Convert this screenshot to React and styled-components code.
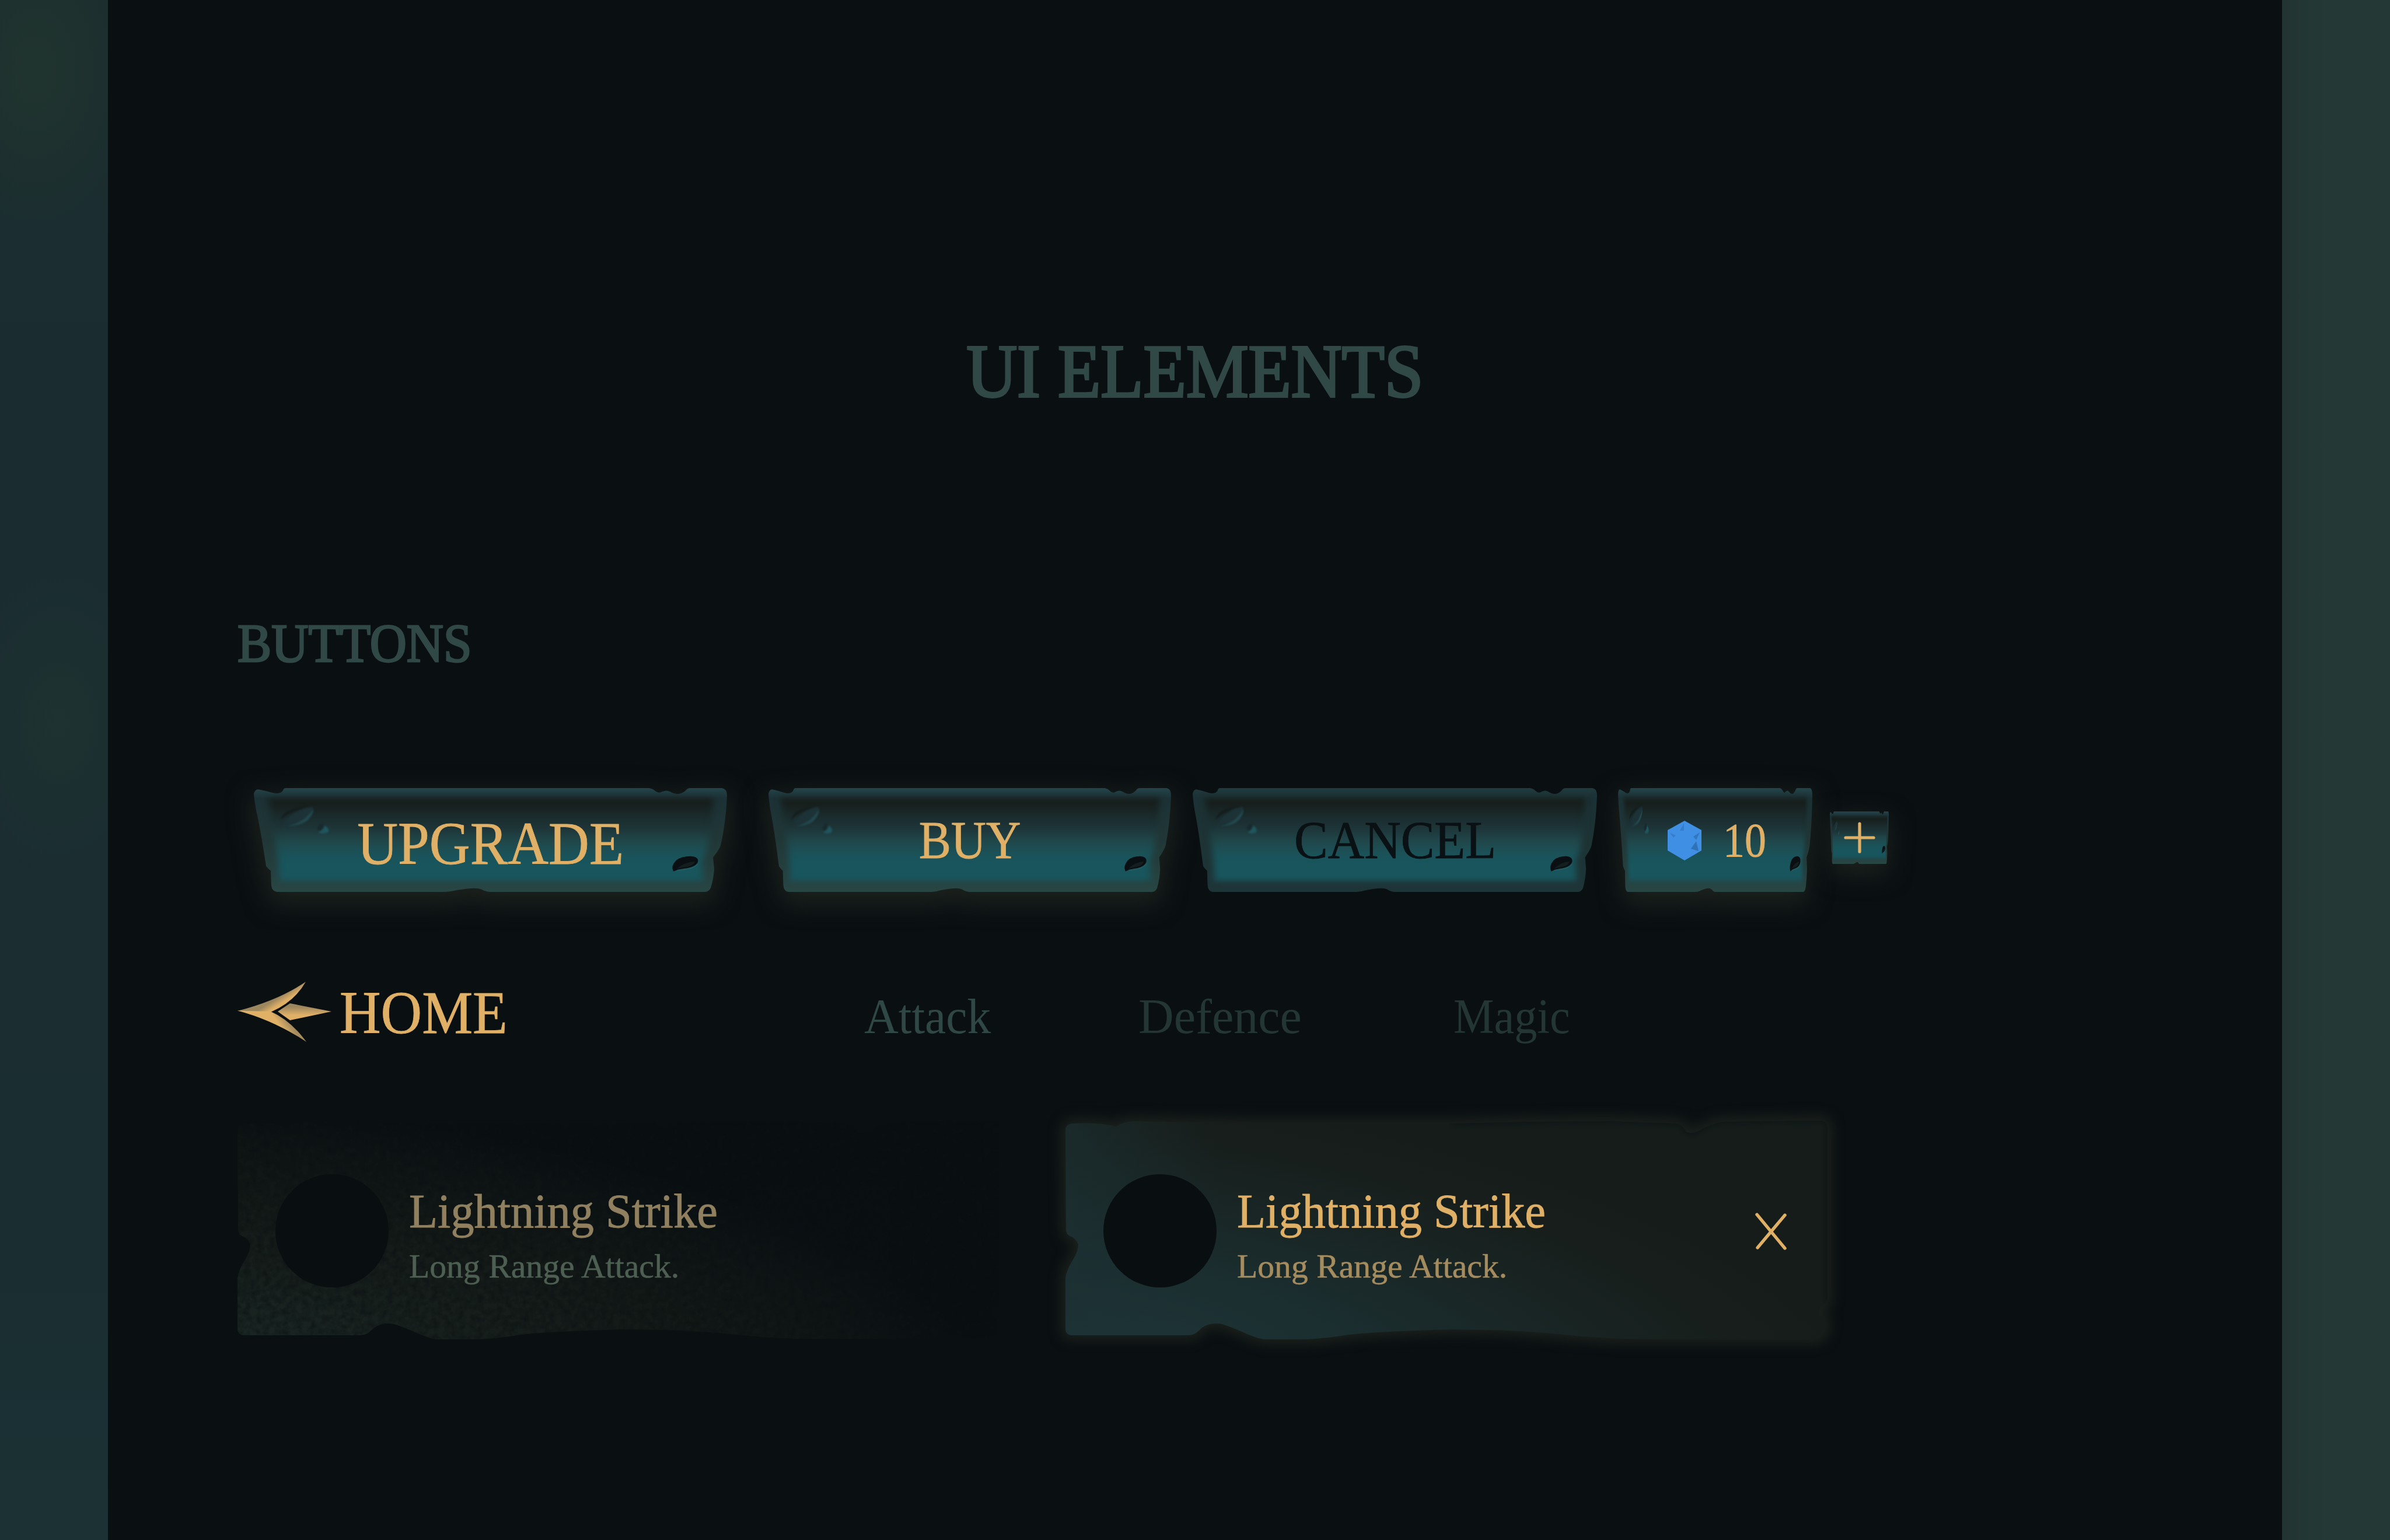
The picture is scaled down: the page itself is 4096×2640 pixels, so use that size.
import React from "react";
import styled, { createGlobalStyle } from "styled-components";

const GlobalStyle = createGlobalStyle`
  html, body {
    margin: 0;
    padding: 0;
    background: #0a0f12;
  }
`;

const Page = styled.div`
  display: grid;
  grid-template-columns: 185px 1fr 185px;
  width: 4096px;
  height: 2640px;
  overflow: hidden;
  font-family: "Liberation Serif", serif;
`;

const LeftRail = styled.div`
  background:
    radial-gradient(ellipse 190px 290px at 60px 120px, #20342f 0%, rgba(32, 52, 47, 0) 100%),
    radial-gradient(ellipse 170px 260px at 100px 1240px, #1e3230 0%, rgba(30, 50, 48, 0) 100%),
    linear-gradient(#1b2d2e, #1a2c30 30%, #1a2d31 75%, #1b3134);
`;

const RightRail = styled.div`
  background: linear-gradient(90deg, #213431, #243835 40%, #243835);
`;

const Panel = styled.main`
  display: flex;
  flex-direction: column;
  padding: 0 222px;
  background: #0a0f12;
`;

const Text = styled.span`
  display: block;
  flex: none;
  white-space: nowrap;
  font-size: ${(p) => p.$size}px;
  line-height: 1;
  color: ${(p) => p.$color || "#e0b067"};
  transform: scaleX(${(p) => p.$squeeze || 1});
  transform-origin: ${(p) => p.$origin || "left"} center;
  -webkit-text-stroke: ${(p) => p.$stroke || 0}px currentColor;
`;

const Title = styled.h1`
  display: flex;
  justify-content: center;
  margin: 572px 0 0;
  height: 130px;
  font-weight: 400;
`;

const SectionTitle = styled.h2`
  margin: 353px 0 0;
  height: 95px;
  font-weight: 400;
`;

const ButtonRow = styled.div`
  display: flex;
  align-items: flex-start;
  height: 178px;
  margin-top: 201px;
  padding-left: 28px;
`;

const StoneButton = styled.button`
  position: relative;
  flex: none;
  display: flex;
  align-items: center;
  justify-content: center;
  box-sizing: border-box;
  width: ${(p) => p.$w}px;
  height: ${(p) => p.$h || 178}px;
  margin: ${(p) => p.$top || 0}px 0 0 ${(p) => p.$left || 0}px;
  padding: ${(p) => p.$drop || 0}px 0 0;
  border: 0;
  background: none;
  font-family: inherit;
`;

const StoneArt = styled.svg`
  position: absolute;
  inset: 0;
  width: 100%;
  height: 100%;
  overflow: visible;
`;

const Face = styled.div`
  position: relative;
  display: flex;
  align-items: center;
  gap: ${(p) => p.$gap || 0}px;
  padding-left: ${(p) => p.$shift || 0}px;
`;

const NavRow = styled.nav`
  display: flex;
  align-items: flex-start;
  height: 110px;
  margin-top: 152px;
`;

const HomeLink = styled.div`
  display: flex;
  gap: 13px;
  width: 1074px;
`;

const ArrowIcon = styled.svg`
  width: 162px;
  height: 104px;
  margin-top: 2px;
`;

const HomeLabel = styled.div`
  margin-top: 3px;
`;

const Tab = styled.div`
  width: ${(p) => p.$w}px;
  margin-top: 20px;
`;

const CardRow = styled.div`
  display: flex;
  gap: 113px;
  margin-top: 131px;
`;

const Card = styled.article`
  position: relative;
  display: flex;
  flex: none;
  box-sizing: border-box;
  width: 1306px;
  height: 380px;
  padding: 91px 70px 0 65px;
`;

const CardArt = styled.svg`
  position: absolute;
  inset: 0;
  width: 1306px;
  height: 380px;
  overflow: visible;

  filter {
    color-interpolation-filters: sRGB;
  }
`;

const Avatar = styled.div`
  position: relative;
  flex: none;
  width: 194px;
  height: 194px;
  border-radius: 50%;
  background: #090e11;
`;

const CardText = styled.div`
  position: relative;
  display: flex;
  flex-direction: column;
  flex: 1;
  gap: 24px;
  margin: 23px 0 0 35px;
`;

const CloseIcon = styled.svg`
  position: relative;
  flex: none;
  width: 54px;
  height: 64px;
  margin-top: 66px;
`;

const STONE =
  "M0 10 Q2 1 9 2.5 Q22 5 32 8 Q46 11 50 4 Q51 0 55 0 L677 0 Q684 1 688 5 Q694 10 700 6 Q707 3 713 6 Q724 12 732 9 Q738 7 742 2 Q744 0 748 0 L802 0 Q811 1 811 13 Q809 60 800 98 Q797 106 787 118 L789 138 Q788 155 783 170 Q780 177 772 177 L405 177 Q396 176 391 173 Q384 170 371 171 Q352 173 343 175 Q335 177 323 177 L42 177 Q31 177 30 166 L29 141 Q24 137 21 133 Q12 72 4 38 Q1 22 0 10Z";

// Carved slab behind every button, stretched to the width of the button.
// sx / sy undo the stretch so the blur stays even on narrow buttons.
const Stone = ({ id, glow, w = 811, h = 177 }) => {
  const sx = 811 / w;
  const sy = 177 / h;
  return (
    <StoneArt viewBox="0 0 811 177" preserveAspectRatio="none">
      <defs>
        <linearGradient id={`${id}-rim`} x1="0" y1="0" x2="0" y2="1">
          <stop offset="0" stopColor={glow ? "#24444a" : "#203a3d"} />
          <stop offset="0.1" stopColor="#1c3135" />
          <stop offset="0.5" stopColor={glow ? "#213737" : "#1d3334"} />
          <stop offset="1" stopColor={glow ? "#284644" : "#1e3538"} />
        </linearGradient>
        <linearGradient id={`${id}-face`} x1="0" y1="0" x2="0" y2="1">
          <stop offset="0" stopColor="#161d1a" />
          <stop offset="0.08" stopColor="#171f1c" />
          <stop offset="0.22" stopColor="#1a2b2d" />
          <stop offset="0.36" stopColor="#1d3437" />
          <stop offset="0.52" stopColor="#20474a" />
          <stop offset="0.68" stopColor="#1a5259" />
          <stop offset="0.8" stopColor="#18555d" />
          <stop offset="1" stopColor="#18555d" />
        </linearGradient>
        <clipPath id={`${id}-clip`}>
          <path d={STONE} />
        </clipPath>
        <filter
          id={`${id}-soft`}
          x="-10%"
          y="-20%"
          width="120%"
          height="140%"
          colorInterpolationFilters="sRGB"
        >
          <feGaussianBlur stdDeviation="6 5" />
        </filter>
        <filter id={`${id}-chip`} colorInterpolationFilters="sRGB">
          <feGaussianBlur stdDeviation="1.6" />
        </filter>
        <filter
          id={`${id}-glow`}
          x="-100%"
          y="-100%"
          width="300%"
          height="300%"
          colorInterpolationFilters="sRGB"
        >
          <feGaussianBlur stdDeviation={`${20 * sx} ${20 * sy}`} />
        </filter>
      </defs>
      {glow && (
        <path
          d={STONE}
          transform={`translate(0 ${14 * sy})`}
          fill="#1c221d"
          stroke="#1c221d"
          strokeWidth="12"
          filter={`url(#${id}-glow)`}
        />
      )}
      <path d={STONE} fill={`url(#${id}-rim)`} />
      <g clipPath={`url(#${id}-clip)`}>
        <path
          d="M24 17 L788 17 Q784 70 776 108 L768 124 L770 158 L44 158 L42 128 Q34 66 24 17Z"
          fill={`url(#${id}-face)`}
          filter={`url(#${id}-soft)`}
        />
        <g filter={`url(#${id}-chip)`}>
          <path d="M46 54 Q50 34 98 30 Q60 40 46 54Z" fill="#131d1c" />
          <path d="M50 60 Q72 34 101 32 Q104 40 94 53 Q84 64 68 64Z" fill="#1c3236" />
          <path d="M102 36 Q103 44 92 55 Q82 64 56 65 Q78 60 88 51 Q97 43 102 36Z" fill="#22494f" />
          <path d="M108 70 Q112 58 119 61 Q121 66 114 73Z" fill="#182a2d" />
          <path d="M121 64 Q130 68 128 75 Q118 80 110 75 Q120 72 121 64Z" fill="#20555d" />
        </g>
      </g>
      <path
        d="M719 142 Q714 133 724 123 Q733 116 749 116 Q763 117 761 126 Q757 135 738 137 Q728 138 719 142Z"
        fill="#090f12"
      />
      <path d="M724 138 Q738 126 756 125 Q754 133 738 135 Q730 136 724 138Z" fill="#141e1e" />
      <path d="M725 140 Q752 139 761 130" fill="none" stroke="#4b6a60" strokeWidth="1" opacity="0.6" />
    </StoneArt>
  );
};

const Gem = () => (
  <svg width="60" height="68" viewBox="0 0 60 68">
    <path d="M30 0 L59 16 L59 51 L30 68 L1 51 L1 16Z" fill="#3f8fe5" />
    <path d="M29 4 L22 17 L29 17Z" fill="#347ecb" />
    <path d="M5 21 L11 29 L15 25Z" fill="#347ecb" />
    <path d="M56 20 L45 27 L50 33Z" fill="#3177be" />
    <path d="M50 35 L41 48 L54 52Z" fill="#2f72b6" />
  </svg>
);

const Plus = () => (
  <svg width="54" height="54" viewBox="0 0 54 54">
    <path d="M27 3V51M3 27H51" stroke="#e0b067" strokeWidth="5.2" strokeLinecap="round" />
  </svg>
);

const BackArrow = () => (
  <ArrowIcon viewBox="0 0 162 104">
    <defs>
      <linearGradient id="wing" gradientUnits="userSpaceOnUse" x1="62" y1="24" x2="76" y2="46">
        <stop offset="0.25" stopColor="#9c865e" />
        <stop offset="0.7" stopColor="#dfaf66" />
      </linearGradient>
      <linearGradient id="wingLow" gradientUnits="userSpaceOnUse" x1="88" y1="70" x2="74" y2="80">
        <stop offset="0" stopColor="#a58c5f" />
        <stop offset="0.9" stopColor="#e0b067" />
      </linearGradient>
      <linearGradient id="head" x1="0" y1="0" x2="0" y2="1">
        <stop offset="0.2" stopColor="#9c865e" />
        <stop offset="0.7" stopColor="#e0b067" />
      </linearGradient>
    </defs>
    <path d="M0 50 Q70 32 117 0 Q98 34 57 52Z" fill="url(#wing)" />
    <path d="M0 49.5 L57 51 Q91 66 118 103 Q62 66 0 49.5Z" fill="url(#wingLow)" />
    <path d="M69 51 L90 37 L161 51 L90 66Z" fill="url(#head)" />
  </ArrowIcon>
);

const SLAB =
  "M0 14 Q1 3 16 4 Q55 2 87 9 Q98 1 118 0 L320 4 L663 4 Q810 0 935 0 L1048 4 Q1056 6 1064 18 Q1072 23 1085 17 Q1108 3 1128 1 L1292 -1 Q1306 -1 1306 12 L1306 308 Q1302 316 1294 318 Q1289 327 1294 333 Q1302 337 1302 345 L1301 358 Q1299 373 1284 373 L958 373 Q900 371 844 365 Q780 359 731 358 L663 357 Q540 360 486 366 Q440 373 410 374 L345 374 Q330 374 303 361 L278 351 Q254 341 234 354 Q222 367 212 367 L12 367 Q0 367 0 355 L0 269 Q3 252 14 236 Q22 222 22 211 Q17 200 8 197 Q1 194 1 185Z";

const ActiveCardBack = () => (
  <CardArt viewBox="0 0 1306 380">
    <defs>
      <radialGradient
        id="on-fill"
        gradientUnits="userSpaceOnUse"
        cx="0"
        cy="0"
        r="1"
        gradientTransform="translate(30 400) rotate(6) scale(1400 470)"
      >
        <stop offset="0" stopColor="#1e3638" />
        <stop offset="0.35" stopColor="#1b2e30" />
        <stop offset="0.6" stopColor="#192625" />
        <stop offset="0.85" stopColor="#171e1b" />
        <stop offset="1" stopColor="#151c1a" />
      </radialGradient>
      <linearGradient id="on-side" x1="0" y1="0" x2="1" y2="0">
        <stop offset="0" stopColor="#1c3033" stopOpacity="0.6" />
        <stop offset="0.2" stopColor="#1c3033" stopOpacity="0" />
      </linearGradient>
      <filter id="on-glow" x="-10%" y="-20%" width="120%" height="140%">
        <feGaussianBlur stdDeviation="10" />
      </filter>
      <filter id="on-edge" x="-5%" y="-5%" width="110%" height="110%">
        <feGaussianBlur stdDeviation="3" />
      </filter>
      <clipPath id="on-slab">
        <path d={SLAB} />
      </clipPath>
    </defs>
    <path
      d={SLAB}
      fill="#1b211c"
      stroke="#1b211c"
      strokeWidth="16"
      strokeLinejoin="round"
      filter="url(#on-glow)"
    />
    <path d={SLAB} fill="url(#on-fill)" />
    <path d={SLAB} fill="url(#on-side)" />
    <g clipPath="url(#on-slab)">
      <path
        d="M663 4 Q810 0 935 0 L1048 4 Q1056 6 1064 18 Q1072 23 1085 17 Q1108 3 1128 1 L1292 -1 Q1306 -1 1306 12 L1306 308"
        fill="none"
        stroke="#0c1213"
        strokeWidth="6"
        opacity="0.6"
        filter="url(#on-edge)"
      />
    </g>
  </CardArt>
);

const IdleCardBack = () => (
  <CardArt viewBox="0 0 1306 380">
    <defs>
      <radialGradient
        id="off-fill"
        gradientUnits="userSpaceOnUse"
        cx="0"
        cy="0"
        r="1"
        gradientTransform="translate(20 390) rotate(5) scale(1290 420)"
      >
        <stop offset="0" stopColor="#1a2725" />
        <stop offset="0.3" stopColor="#171f1c" />
        <stop offset="0.6" stopColor="#131917" />
        <stop offset="0.85" stopColor="#0e1414" />
        <stop offset="1" stopColor="#0a0f12" />
      </radialGradient>
      <filter id="off-grain" x="0" y="0" width="100%" height="100%">
        <feTurbulence type="fractalNoise" baseFrequency="0.09" numOctaves="3" seed="4" />
        <feColorMatrix values="0 0 0 0 0.039  0 0 0 0 0.059  0 0 0 0 0.07  1.4 0 0 0 -0.5" />
      </filter>
      <clipPath id="off-slab">
        <path d={SLAB} />
      </clipPath>
    </defs>
    <path d={SLAB} fill="url(#off-fill)" />
    <g clipPath="url(#off-slab)" opacity="0.8">
      <rect width="1306" height="380" filter="url(#off-grain)" />
    </g>
  </CardArt>
);

const SkillCard = ({ active, title, subtitle }) => (
  <Card>
    {active ? <ActiveCardBack /> : <IdleCardBack />}
    <Avatar />
    <CardText>
      <Text $size={82} $squeeze={0.98} $stroke={0.8} $color={active ? "#e0b067" : "#90805f"}>
        {title}
      </Text>
      <Text $size={58} $squeeze={0.995} $stroke={0.5} $color={active ? "#a58c5f" : "#4d5f52"}>
        {subtitle}
      </Text>
    </CardText>
    {active && (
      <CloseIcon viewBox="0 0 54 64">
        <path d="M3 3L51 61M51 4L4 60" stroke="#e0b067" strokeWidth="5.4" strokeLinecap="round" />
      </CloseIcon>
    )}
  </Card>
);

const App = () => (
  <>
    <GlobalStyle />
    <Page>
      <LeftRail />
      <Panel>
        <Title>
          <Text $size={129} $squeeze={0.93} $origin="center" $color="#304846" $stroke={4}>
            UI ELEMENTS
          </Text>
        </Title>
        <SectionTitle>
          <Text $size={94} $squeeze={0.93} $color="#304846" $stroke={3}>
            BUTTONS
          </Text>
        </SectionTitle>

        <ButtonRow>
          <StoneButton $w={811} $drop={11}>
            <Stone id="upgrade" glow />
            <Face>
              <Text $size={104} $squeeze={0.93} $origin="center" $stroke={0.8}>
                UPGRADE
              </Text>
            </Face>
          </StoneButton>
          <StoneButton $w={690} $left={71}>
            <Stone id="buy" w={690} glow />
            <Face>
              <Text $size={92} $squeeze={0.9} $origin="center" $stroke={0.8}>
                BUY
              </Text>
            </Face>
          </StoneButton>
          <StoneButton $w={693} $left={37}>
            <Stone id="cancel" w={693} />
            <Face>
              <Text $size={92} $squeeze={0.94} $origin="center" $color="#0a1114" $stroke={0.8}>
                CANCEL
              </Text>
            </Face>
          </StoneButton>
          <StoneButton $w={333} $left={36} $drop={1}>
            <Stone id="gems" w={333} glow />
            <Face $gap={36} $shift={12}>
              <Gem />
              <Text $size={82} $squeeze={0.9} $stroke={0.8}>
                10
              </Text>
            </Face>
          </StoneButton>
          <StoneButton $w={101} $h={90} $left={30} $top={40}>
            <Stone id="add" w={101} h={90} glow />
            <Face>
              <Plus />
            </Face>
          </StoneButton>
        </ButtonRow>

        <NavRow>
          <HomeLink>
            <BackArrow />
            <HomeLabel>
              <Text $size={104} $squeeze={0.94} $stroke={0.8}>
                HOME
              </Text>
            </HomeLabel>
          </HomeLink>
          <Tab $w={470}>
            <Text $size={84} $squeeze={0.97} $color="#2f4845">
              Attack
            </Text>
          </Tab>
          <Tab $w={540}>
            <Text $size={84} $squeeze={1} $color="#233634">
              Defence
            </Text>
          </Tab>
          <Tab $w={220}>
            <Text $size={84} $squeeze={0.93} $color="#233634">
              Magic
            </Text>
          </Tab>
        </NavRow>

        <CardRow>
          <SkillCard title="Lightning Strike" subtitle="Long Range Attack." />
          <SkillCard active title="Lightning Strike" subtitle="Long Range Attack." />
        </CardRow>
      </Panel>
      <RightRail />
    </Page>
  </>
);

export default App;
